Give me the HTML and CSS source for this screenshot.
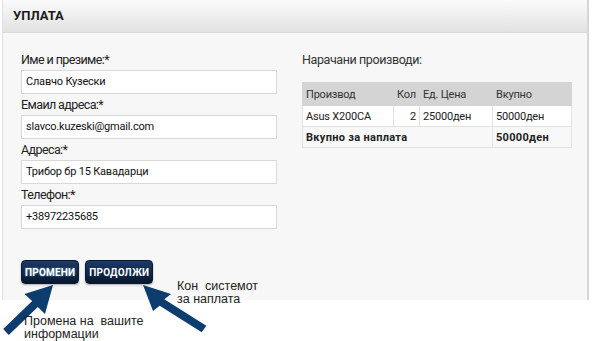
FILE: index.html
```html
<!DOCTYPE html>
<html lang="mk">
<head>
    <meta charset="UTF-8">
    <title>Уплата</title>
    <link rel="stylesheet" href="styles.css">
</head>
<body>
    <div class="page">
        <div class="panel">
            <div class="panel-head">УПЛАТА</div>
            <div class="panel-body">
                <div class="form-col">
                    <label class="lbl">Име и презиме:*</label>
                    <div class="field">Славчо Кузески</div>
                    <label class="lbl">Емаил адреса:*</label>
                    <div class="field">slavco.kuzeski@gmail.com</div>
                    <label class="lbl">Адреса:*</label>
                    <div class="field">Трибор бр 15 Кавадарци</div>
                    <label class="lbl">Телефон:*</label>
                    <div class="field">+38972235685</div>
                </div>
                <div class="order-col">
                    <div class="order-title">Нарачани производи:</div>
                    <table class="order">
                        <tr class="head">
                            <td class="c-name">Производ</td>
                            <td class="c-qty">Кол</td>
                            <td class="c-price">Ед. Цена</td>
                            <td class="c-sum">Вкупно</td>
                        </tr>
                        <tr>
                            <td>Asus X200CA</td>
                            <td class="num">2</td>
                            <td>25000ден</td>
                            <td>50000ден</td>
                        </tr>
                        <tr class="total">
                            <td colspan="3">Вкупно за наплата</td>
                            <td>50000ден</td>
                        </tr>
                    </table>
                </div>
            </div>
            <div class="actions">
                <button class="btn btn-change">ПРОМЕНИ</button>
                <button class="btn">ПРОДОЛЖИ</button>
            </div>
        </div>

        <!-- annotations over the screenshot -->
        <svg class="arrows" width="594" height="341" viewBox="0 0 594 341">
            <path d="M53 285 L45 314 L37.8 306.9 L8.8 334.9 L3.2 329.1 L32.2 301.1 L24.5 294 Z" fill="#0c3d6e"/>
            <path d="M143 285 L171 294 L164.3 299.3 L206.3 325.8 L201.7 332.2 L159.7 305.7 L153 311 Z" fill="#0c3d6e"/>
        </svg>
        <div class="note note-pay">Кон&nbsp; системот<br>за наплата</div>
        <div class="note note-info">Промена на&nbsp; вашите<br>информации</div>
    </div>
</body>
</html>
```
FILE: styles.css
```css
body {
    margin: 0;
    background: #fff;
    font-family: Roboto, "Liberation Sans", sans-serif;
    color: #222;
}
.page {
    position: relative;
    width: 594px;
    height: 341px;
    overflow: hidden;
}
.panel {
    margin-left: 2px;
    width: 587px;
    height: 300px;
    background: #f7f7f7;
    border-left: 1px solid #e0e0e0;
    border-right: 2px solid #d6d6d6;
    box-sizing: border-box;
}
.panel-head {
    height: 32px;
    line-height: 32px;
    padding-left: 10px;
    font-size: 13px;
    font-weight: bold;
    color: #1a1a1a;
    background: linear-gradient(#fafafa, #e2e2e2);
    border-bottom: 1px solid #dadada;
}
.panel-body {
    display: flex;
    padding: 16px 0 0 18px;
}
.form-col {
    width: 256px;
    display: flex;
    flex-direction: column;
}
.lbl {
    font-size: 12.5px;
    letter-spacing: -0.6px;
    line-height: 21px;
    color: #222;
}
.field {
    height: 24px;
    line-height: 22px;
    box-sizing: border-box;
    background: #fff;
    border: 1px solid #d8d8d8;
    padding-left: 4px;
    font-size: 11px;
    letter-spacing: -0.2px;
    color: #111;
}
.order-col {
    margin-left: 25px;
}
.order-title {
    font-size: 12.5px;
    letter-spacing: -0.4px;
    line-height: 21px;
    color: #333;
}
.order {
    margin-top: 12px;
    width: 270px;
    border-collapse: collapse;
    font-size: 11px;
    letter-spacing: -0.2px;
    background: #fff;
    border: 1px solid #dcdcdc;
}
.order td {
    height: 20px;
    padding: 0 3px;
    border: 1px solid #e2e2e2;
}
.order .head td {
    height: 22px;
    background: #d4d4d4;
    border-color: #d4d4d4;
    color: #333;
}
.order .c-name { width: 84px; }
.order .c-qty { width: 19px; }
.order .c-price { width: 66px; }
.order .num { text-align: right; }
.order .total td {
    font-weight: bold;
    background: #f8f8f8;
    letter-spacing: 0.3px;
}
.actions {
    display: flex;
    gap: 6px;
    margin: 31px 0 0 18px;
}
.btn {
    height: 24px;
    padding: 0 3px;
    border: 1px solid #0a1a33;
    border-radius: 4px;
    background: linear-gradient(#1d3a66, #07172f);
    color: #fff;
    font-family: Roboto, "Liberation Sans", sans-serif;
    font-size: 10px;
    font-weight: bold;
    letter-spacing: 0.2px;
    box-shadow: 0 1px 2px rgba(0, 0, 0, 0.3);
}
.btn-change {
    text-shadow: 0 0 2px #6ab;
}
.note {
    position: absolute;
    font-family: "Liberation Sans", Arial, sans-serif;
    font-size: 12.5px;
    line-height: 13px;
    color: #222;
}
.note-pay {
    left: 177px;
    top: 280px;
}
.note-info {
    left: 24px;
    top: 315px;
}
.arrows {
    position: absolute;
    left: 0;
    top: 0;
}
```
